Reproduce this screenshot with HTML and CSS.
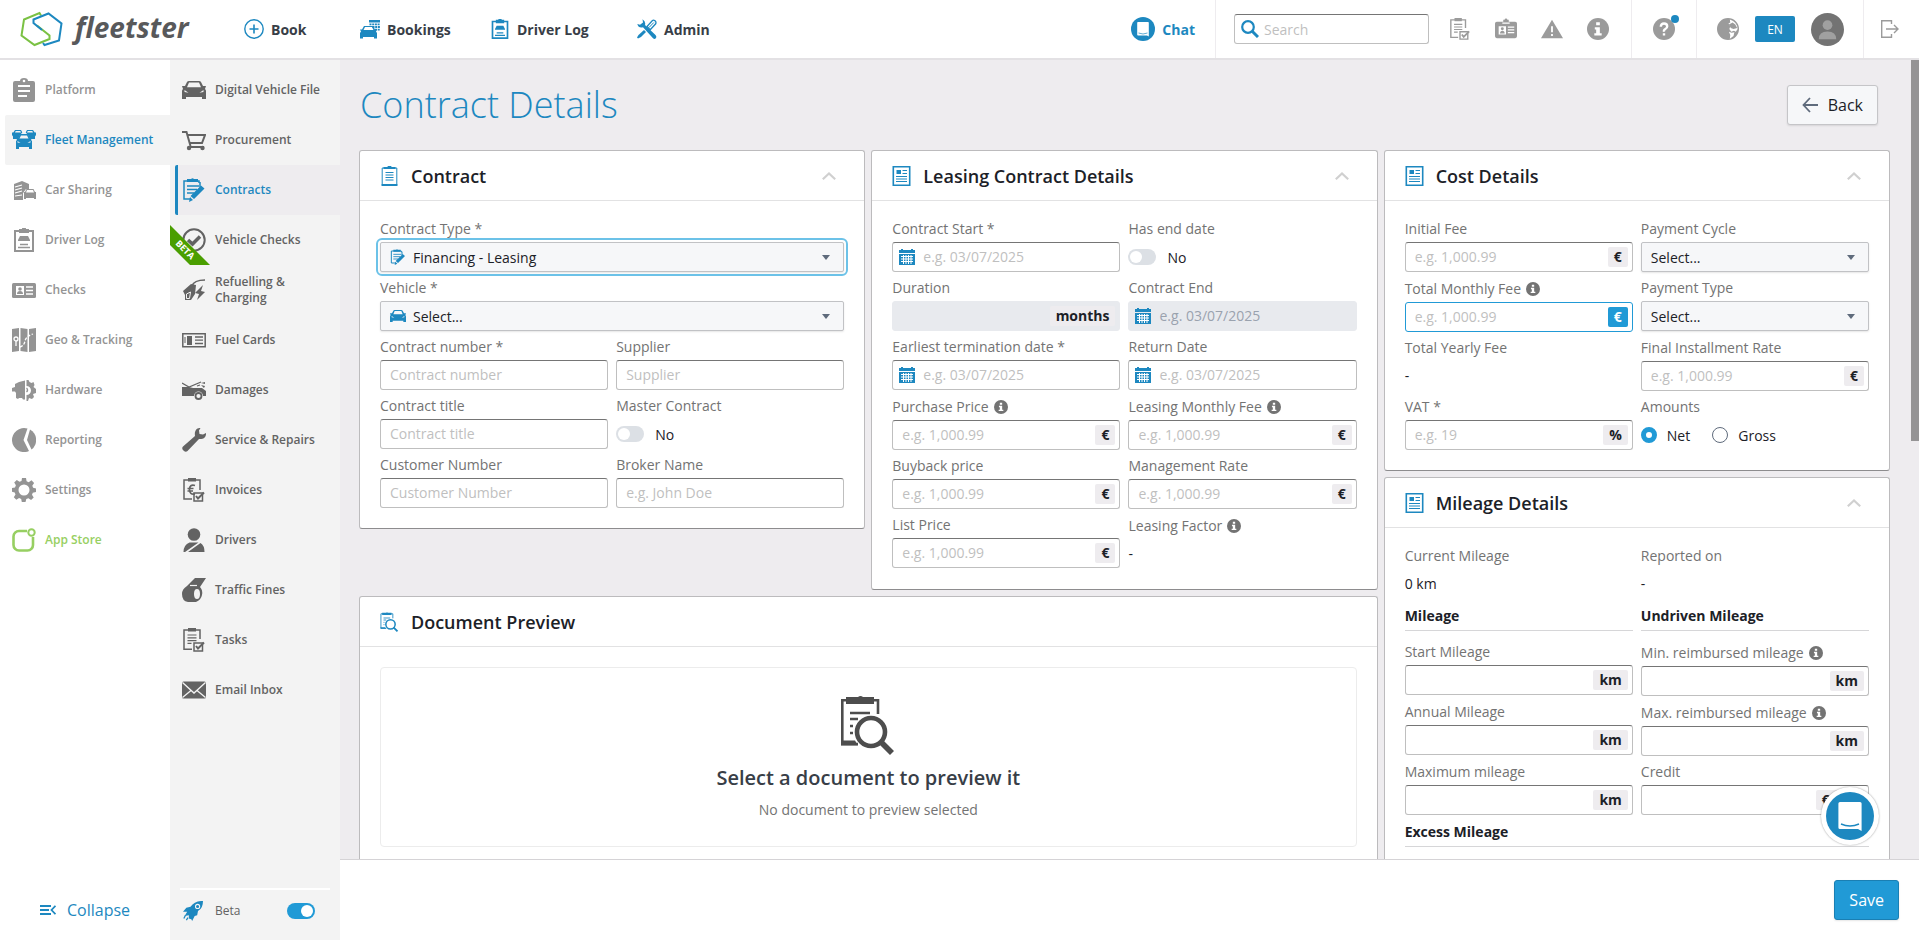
FILE: index.html
```
<!DOCTYPE html>
<html lang="en">
<head>
    <meta charset="UTF-8">
    <meta name="viewport" content="width=device-width, initial-scale=1.0">
    <title>Contract Details - fleetster</title>
    <link rel="stylesheet" href="styles.css">
</head>
<body>

    <!-- Icon sprite -->
    <svg class="sprite" aria-hidden="true">
        <symbol id="i-car" viewBox="0 0 24 18"><path fill-rule="evenodd" d="M1 8 0 5h3l2-4q.5-1 2-1h10q1.5 0 2 1l2 4h3l-1 3q1 .8 1 2v8h-4v-2H4v2H0v-8q0-1.200 1-2zM5 6.200h14l-2-4.700H7zM2.500 9v2l4 .8zM21.500 9v2l-4 .8z"/></symbol>
        <symbol id="i-platform" viewBox="0 0 24 24"><path d="M3 3h5a4 3 0 0 1 8 0h5a2 2 0 0 1 2 2v17a2 2 0 0 1-2 2H3a2 2 0 0 1-2-2V5a2 2 0 0 1 2-2z"/><path class="cut" stroke-width="2" d="M6 8h12M6 13h12M6 18h9"/><circle class="cutfill" cx="12" cy="3" r="1.300"/></symbol>
        <symbol id="i-fleet" viewBox="0 0 24 24"><path fill-rule="evenodd" d="M0 4.500h1.300L3 2h6l1.300 2.500L8 7l-2 4H1V8.500L0 7zM3 4.500h6L8.300 3H3.700zM24 4.500h-1.300L21 2h-6l-1.300 2.500L16 7l2 4h5V8.500L24 7zM21 4.500h-6l.7-1.500h4.600z"/><path fill-rule="evenodd" d="M5 12l-1-2h2l2-4h8l2 4h2l-1 2 1 1v8h-3v-2H7v2H4v-8zM7.500 10.500h9L15 7.500H9zM5.500 13v1.500l3 .5zM18.500 13v1.500l-3 .5z"/></symbol>
        <symbol id="i-sharing" viewBox="0 0 24 24"><path d="M2 22V6l8-3 7 3v5h-3l-3 4v7H1z"/><path class="cut" stroke-width="1.200" d="M3 9l7-2M3 12l7-2M3 15l7-2M3 18l7-1"/><path fill-rule="evenodd" d="M12 15l-.5-1h1.500l1.500-3h7l1.500 3H24v7h-2v-1h-8v1h-2zM14 14.500h8l-1-2.500h-6z"/></symbol>
        <symbol id="i-log" viewBox="0 0 24 24"><path class="ln" stroke-width="2" d="M3 3h18v20H3z"/><path d="M7 1h3a2 2 0 0 1 4 0h3v4H7zM6 12l2-4h8l2 4v1H6z"/><path class="ln" stroke-width="1.500" d="M8 16.500h8M6 19.500h12"/></symbol>
        <symbol id="i-checks" viewBox="0 0 24 24"><rect y="5" width="24" height="15" rx="1.500"/><path class="cut" stroke-width="1.500" d="M14 9h7M14 12.500h7M14 16h7"/><path class="cutfill" d="M4 8h8v9H4z"/><circle cx="8" cy="11" r="1.800"/><path d="M5 16q0-3 3-3t3 3z"/></symbol>
        <symbol id="i-geo" viewBox="0 0 24 24"><path d="M0 1l7-1v23l-7 1zM8.500 0l7 1v23l-7-1zM17 1l7-1v23l-7 1z"/><path class="cut" stroke-width="1.300" stroke-dasharray="3 1.500" d="M8 19q4-1 5-6t8-7"/><circle class="cut" cx="4" cy="11" r="2" stroke-width="1.300"/><path class="cut" stroke-width="1.300" d="M4 13v5"/></symbol>
        <symbol id="i-hardware" viewBox="0 0 24 24"><path d="M13 2.500v19h-2l-1-1.500H7l-1 1-2-1v-5l-1-1.500H0V10l3-1V6l4-2z"/><path d="M14.500 2h2l1 2 2 1 2-1 1 3-1 2 2.500 2v4l-3 1 1 3-2 2-3-1-1 3h-1.500v-6a4.500 4.500 0 0 0 0-9z"/><path class="ln" stroke-width="1.500" d="M14.500 10a2.500 2.500 0 0 1 0 4"/></symbol>
        <symbol id="i-pie" viewBox="0 0 24 24"><path d="M15.500.6A12 12 0 1 0 17 23l-5.500-11z"/><path d="M18 1.500a12 12 0 0 1 1.500 20L15 12z"/></symbol>
        <symbol id="i-gear" viewBox="0 0 24 24"><path fill-rule="evenodd" d="M10 0h4l.6 3.300 2.100.9L19.500 2.300l2.600 2.600-1.800 2.900.8 2L24 10.500v3.600l-3.200.7-.8 2 1.700 2.700-2.600 2.600-2.700-1.800-2.100.8L13.500 24h-3.700l-.6-3-2.100-.9-2.800 1.700-2.500-2.600 1.700-2.700-.8-2L0 13.700V10l3-.6.900-2.100L2.200 4.600 4.800 2l2.700 1.700 2-.8zM12 6.500a5.500 5.500 0 1 0 0 11 5.500 5.500 0 0 0 0-11z"/></symbol>
        <symbol id="i-store" viewBox="0 0 24 24"><path class="ln" stroke-width="2.600" d="M15 3H7a5.500 5.500 0 0 0-5.500 5.500V17A5.500 5.500 0 0 0 7 22.500h8.500A5.500 5.500 0 0 0 21 17V9"/><circle class="ln" cx="19.500" cy="4.500" r="3.200" stroke-width="2"/></symbol>
        <symbol id="i-cart" viewBox="0 0 24 24"><path class="ln" stroke-width="2" d="M0 4h4.500l4 14M6 7h17l-3 8H8M8 19h14"/><circle cx="7" cy="20" r="2.200"/><circle cx="20.500" cy="20" r="2.200"/></symbol>
        <symbol id="i-contract" viewBox="0 0 24 24"><path class="ln" stroke-width="1.500" d="M17 5V3H2v18h7"/><path class="ln" stroke-width="1.300" d="M5 8h12M5 11.500h10M5 15h7"/><path d="M5 1h4a2 1.500 0 0 1 3 0h4v3H5zM19 7.500l3.500 3L12 21l-3.500-3zM8 19l3 3-4 2z"/><path class="ln" stroke-width="1.500" d="M18 9V4"/></symbol>
        <symbol id="i-vcheck" viewBox="0 0 24 24"><circle class="ln" cx="12" cy="12" r="10.700" stroke-width="2"/><path class="ln" stroke-width="3.500" d="M6 12l4.500 4L18 8.500"/></symbol>
        <symbol id="i-fuel" viewBox="0 0 24 24"><path class="ln" stroke-width="1.500" d="M10 8q2-6 13-6"/><path d="M1 13 9 6l5 1-1 9-4 6H3v-5z"/><path class="cut" stroke-width="1" d="M4.500 20.500V16l4-2-1 6.500z"/><path d="M21 7l-8 8 4 1-2 6 8-8-4-1z"/></symbol>
        <symbol id="i-fcard" viewBox="0 0 24 24"><path class="ln" stroke-width="1.500" d="M.8 5.800h22.400v13H.8z"/><path d="M5 8h5v9H5z"/><path class="ln" stroke-width="1" d="M3 9v6"/><path class="ln" stroke-width="1.300" d="M13 9h8M13 12.200h8M13 15.500h8"/></symbol>
        <symbol id="i-damage" viewBox="0 0 24 24"><path d="M0 9h7l4 1h9l4 3v5h-3a4.500 4.500 0 0 0-9 0H0z"/><path class="ln" stroke-width="1.200" d="M0 5l7 4 12-5M15 8l3-1"/><path d="M19 5l4-1v2zM19 7l4 1-1 2z"/><circle class="ln" cx="16.500" cy="18" r="3" stroke-width="1.800"/></symbol>
        <symbol id="i-wrench" viewBox="0 0 24 24"><path d="M18.500 0 17 2.500 17.500 6l3.500.5L24 5c.3 4-2.500 6.500-7 6L5.500 23c-1 1-2.500 1-3.500 0l-1-1c-1-1-1-2.500 0-3.500L13 8c-.8-5 1.500-8.300 5.500-8z"/></symbol>
        <symbol id="i-invoice" viewBox="0 0 24 24"><path class="ln" stroke-width="1.500" d="M10 21H2V2h16v10"/><path d="M6 0h8v3.500H6z"/><path class="ln" stroke-width="1.700" d="M13 7.500Q7.500 6 7.500 11.500T13 16M5.500 10.500h6M5.500 13h5.500"/><path class="ln" stroke-width="1.500" d="M12 15h8.500v8H12z"/><path class="ln" stroke-width="2" d="M14 18l2 2.500 6-6"/></symbol>
        <symbol id="i-driver" viewBox="0 0 24 24"><circle cx="12" cy="6.500" r="6.300"/><path d="M1.500 24q0-7 6-9.500h9L3 24zM6 24l12.500-9q4 2.500 4 9z"/></symbol>
        <symbol id="i-whistle" viewBox="0 0 24 24"><path fill-rule="evenodd" d="M5 8l8-8h11l-6 9q3 3 2 8t-6 7H6q-6-1-6-8 0-5 5-8zM15 11q-3 0-3 5t3 5 3-5-3-5z"/><path class="cut" stroke-width="1.200" d="M8 7.500h7"/></symbol>
        <symbol id="i-tasks" viewBox="0 0 24 24"><path class="ln" stroke-width="1.500" d="M10 21.200H2V2h16v9"/><path d="M6 0h8v3.500H6z"/><path class="ln" stroke-width="1.200" d="M5.500 7h9M5.500 9.800h9M5.500 12.600h9M5.500 15.400h4"/><path class="ln" stroke-width="1.500" d="M12 15h8.500v8H12z"/><path class="ln" stroke-width="2" d="M14 18l2 2.500 6-6"/></symbol>
        <symbol id="i-mail" viewBox="0 0 24 24"><rect y="3.500" width="24" height="17" rx="1.500"/><path class="cut" stroke-width="1.300" d="M.5 4.500 12 15 23.500 4.500M.5 19.500l8.500-7M23.500 19.500l-8.500-7"/></symbol>
        <symbol id="i-rocket" viewBox="0 0 24 24"><path d="M24 0Q14-.5 9 7L4 8l-4 5h5l-3 5 5-1v4l3 1 1 2 3-6 3-1 1-5Q24 9 24 0z"/><circle class="cut" cx="17.500" cy="6.500" r="2.500" stroke-width="1.300"/><path class="ln" stroke-width="1.500" d="M3 17l-2 4M6 20l-2 3"/></symbol>
        <symbol id="i-collapse" viewBox="0 0 16 10"><path class="ln" stroke-width="1.800" d="M0 1h11M0 5h9M0 9h11M15.500.8 11.500 5l4 4.200"/></symbol>
        <symbol id="i-plus" viewBox="0 0 20 20"><circle class="ln" cx="10" cy="10" r="9.200" stroke-width="1.400"/><path class="ln" stroke-width="1.600" d="M10 5.500v9M5.500 10h9"/></symbol>
        <symbol id="i-bookings" viewBox="0 0 20 20"><path d="M9 1h11v2.500H9z"/><path class="ln" stroke-width="1.800" stroke-dasharray="2 .7" d="M9.500 5.300H20M12.500 8H20M15 10.700h5"/><path fill-rule="evenodd" d="M1 12.500 0 10.500h2l2-3.500h9l2 3.500h2l-1 2 1 1.500v5.500h-3V18H3v1.500H0V14zM3.500 11h10L12 8H5z"/></symbol>
        <symbol id="i-tools" viewBox="0 0 20 20"><path d="M5.500.3Q9 2.500 8 6l10.500 10q1.500 1.700.3 3.200t-3-.2L6 8.300Q1.500 9.500.3 5L3 5.800 6 3.500z"/><path class="ln" stroke-width="1.300" d="M11.500 9 10 7.500l5.500-6q1-1 2.500.3t.7 3l-5.500 6z"/><path class="ln" stroke-width="1" d="M16.800 3.500 12 8.500"/><path d="M7 11l2 2-5 5-3 1.500L0 18.500 1.500 16z"/></symbol>
        <symbol id="i-chat" viewBox="0 0 24 24"><circle cx="12" cy="12" r="12"/><path class="cutfill" d="M7 5h10a.8.8 0 0 1 .8.8V19.500L16 18.500H7a.8.8 0 0 1-.8-.8V5.800A.8.8 0 0 1 7 5z"/><path class="ln" stroke-width=".7" d="M7.500 16q4.500 2 9 0"/></symbol>
        <symbol id="i-search" viewBox="0 0 18 18"><circle class="ln" cx="7" cy="7" r="5.800" stroke-width="2.200"/><path class="ln" stroke-width="3" d="M11.200 11.200 17 17"/></symbol>
        <symbol id="i-badge" viewBox="0 0 24 24"><path d="M2 4h7V2h1.500a1.500 1.500 0 0 1 3 0H15v2h7q2 0 2 2v14q0 2-2 2H2q-2 0-2-2V6q0-2 2-2z"/><path class="cut" stroke-width="1.400" d="M8 5.500h8M14 10h7M14 13h7M14 16h7"/><path class="cutfill" d="M4 9h8v9H4z"/><circle cx="8" cy="11.800" r="1.600"/><path d="M5.500 17q0-3 2.500-3t2.500 3z"/></symbol>
        <symbol id="i-warn" viewBox="0 0 24 24"><path d="M12 2l12 20H0z"/><path class="cut" stroke-width="2" d="M12 9v6.500M12 17.500v2"/></symbol>
        <symbol id="i-info" viewBox="0 0 24 24"><circle cx="12" cy="12" r="12"/><path class="cutfill" d="M10 4.500h4v3.500h-4zM8.500 10H14v6.500h2V19H8v-2.500h2v-4H8.500z"/></symbol>
        <symbol id="i-help" viewBox="0 0 24 24"><circle cx="12" cy="12" r="12"/><path class="cut" stroke-width="2.600" d="M8.500 9.500Q8.500 6 12 6t3.500 3q0 2-2 3T12 15M12 16.500v2.600"/></symbol>
        <symbol id="i-globe" viewBox="0 0 24 24"><path fill-rule="evenodd" d="M12 0a12 12 0 1 0 0 24 12 12 0 0 0 0-24zM14 1.500Q22 4 22.500 12l-2 3-2-1-3 1-2-3 1-3-2-3 2-1zM13 15l3 1 3-.5-1 4-4 3 .5-4z"/><path d="M13 7l4-2 3 2 2 4-4 1-3-1z"/></symbol>
        <symbol id="i-exit" viewBox="0 0 18 18"><path class="ln" stroke-width="1.400" d="M10.500 4V.7H.7v16.600h9.800V14M5 9h12M13 5l4 4-4 4"/></symbol>
        <symbol id="i-doc" viewBox="0 0 16 20"><path class="ln" stroke-width="1" d="M.7 2h14.600v16.500H.7z"/><path d="M2 1h4a2 1.500 0 0 1 4 0h4v2H2zM0 18h16v2H0z"/><path class="ln" stroke-width="1" d="M4 6.500h8M4 9h8M4 11.500h8M4 14h8"/></symbol>
        <symbol id="i-news" viewBox="0 0 18 20"><path class="ln" stroke-width="1.600" d="M.8.8h16.400v18.400H.8z"/><path d="M4 4h4.500v4H4z"/><path class="ln" stroke-width="1" d="M10 4.500h4.500M10 7.500h4.500M3.500 10.500h11M3.500 13h11M3.500 15.500h11"/></symbol>
        <symbol id="i-preview" viewBox="0 0 54 60"><path class="ln" stroke-width="2.600" d="M37 19V5.300H1.300V49H17"/><path d="M5 2h12a3.500 2.800 0 0 1 5 0h11v7H5zM0 45.500h14l3 5H0zM41 44l12 12-4 4-12-12z"/><path class="ln" stroke-width="2.600" d="M9 18h20M9 24h8M9 31h3M9 38h3"/><circle class="ln" cx="30" cy="37" r="14" stroke-width="4.600"/></symbol>
        <symbol id="i-cal" viewBox="0 0 16 16"><path d="M0 1h2V0h2v1h8V0h2v1h2v3H0zM0 5h16v11H0z"/><path class="cut" stroke-width="1" d="M2 7.500h12M2 10h12M2 12.500h12M4.500 6v9M7 6v9M9.500 6v9M12 6v9"/></symbol>
        <symbol id="i-up" viewBox="0 0 14 8"><path class="ln" stroke-width="2.200" d="M.8 7.200 7 1.500l6.200 5.700"/></symbol>
        <symbol id="i-back" viewBox="0 0 16 16"><path class="ln" stroke-width="1.800" d="M16 8H1.500M8 1 1.500 8 8 15"/></symbol>
    </svg>

    <header class="topbar">
        <a class="logo" href="#">
            <svg class="logo-mark" viewBox="0 0 43 36" aria-hidden="true">
                <path fill="none" stroke="#7ac143" stroke-width="2" d="M21 4.500 19.500 2 4 8.500 1.500 24.500 14.500 34 29.500 28V24.500L17 14.500"/>
                <path fill="none" stroke="#1d88c0" stroke-width="2" d="M22 19 13.500 12V8.500L28.500 2.500 41.500 12.500 39 29.500 24.500 34 23 32"/>
            </svg>
            <span class="logo-text">fleetster</span>
        </a>
        <nav class="topnav" aria-label="Main">
            <a href="#"><svg><use href="#i-plus"/></svg>Book</a>
            <a href="#"><svg><use href="#i-bookings"/></svg>Bookings</a>
            <a href="#"><svg><use href="#i-log"/></svg>Driver Log</a>
            <a href="#"><svg><use href="#i-tools"/></svg>Admin</a>
        </nav>
        <div class="tools">
            <a class="chat-link" href="#"><svg><use href="#i-chat"/></svg>Chat</a>
            <div class="tool-group search-group">
                <div class="search">
                    <svg><use href="#i-search"/></svg>
                    <input type="text" placeholder="Search" aria-label="Search">
                </div>
                <button class="tool" aria-label="Tasks"><svg><use href="#i-tasks"/></svg></button>
                <button class="tool" aria-label="License checks"><svg><use href="#i-badge"/></svg></button>
                <button class="tool" aria-label="Warnings"><svg><use href="#i-warn"/></svg></button>
                <button class="tool" aria-label="Information"><svg><use href="#i-info"/></svg></button>
            </div>
            <div class="tool-group">
                <button class="tool help" aria-label="Help"><svg><use href="#i-help"/></svg></button>
            </div>
            <div class="tool-group user-group">
                <button class="tool" aria-label="Language"><svg><use href="#i-globe"/></svg></button>
                <button class="lang">EN</button>
                <button class="avatar" aria-label="Account">
                    <svg viewBox="0 0 34 34"><circle cx="17" cy="17" r="17" fill="#737373"/><circle cx="17" cy="12.500" r="5" fill="#a0a0a0"/><path d="M8 27q0-8 9-8t9 8z" fill="#a0a0a0"/></svg>
                </button>
            </div>
            <div class="tool-group">
                <button class="tool exit" aria-label="Log out"><svg><use href="#i-exit"/></svg></button>
            </div>
        </div>
    </header>

    <div class="layout">
        <!-- First level navigation -->
        <nav class="sidebar" aria-label="Modules">
            <a href="#"><svg><use href="#i-platform"/></svg>Platform</a>
            <a href="#" class="active"><svg><use href="#i-fleet"/></svg>Fleet Management</a>
            <a href="#"><svg><use href="#i-sharing"/></svg>Car Sharing</a>
            <a href="#"><svg><use href="#i-log"/></svg>Driver Log</a>
            <a href="#"><svg><use href="#i-checks"/></svg>Checks</a>
            <a href="#"><svg><use href="#i-geo"/></svg>Geo &amp; Tracking</a>
            <a href="#"><svg><use href="#i-hardware"/></svg>Hardware</a>
            <a href="#"><svg><use href="#i-pie"/></svg>Reporting</a>
            <a href="#"><svg><use href="#i-gear"/></svg>Settings</a>
            <a href="#" class="store"><svg><use href="#i-store"/></svg>App Store</a>
            <button class="collapse"><svg><use href="#i-collapse"/></svg>Collapse</button>
        </nav>

        <!-- Second level navigation -->
        <nav class="sidebar submenu" aria-label="Fleet Management">
            <a href="#"><svg><use href="#i-car"/></svg>Digital Vehicle File</a>
            <a href="#"><svg><use href="#i-cart"/></svg>Procurement</a>
            <a href="#" class="active"><svg><use href="#i-contract"/></svg>Contracts</a>
            <a href="#"><svg><use href="#i-vcheck"/></svg>Vehicle Checks
                <svg class="ribbon" viewBox="0 0 40 40"><path d="M0 0l40 40H20L0 20z" fill="#4a9e00"/><text x="0" y="0" transform="translate(5 19) rotate(45)">BETA</text></svg>
            </a>
            <a href="#"><svg><use href="#i-fuel"/></svg>Refuelling &amp;<br>Charging</a>
            <a href="#"><svg><use href="#i-fcard"/></svg>Fuel Cards</a>
            <a href="#"><svg><use href="#i-damage"/></svg>Damages</a>
            <a href="#"><svg><use href="#i-wrench"/></svg>Service &amp; Repairs</a>
            <a href="#"><svg><use href="#i-invoice"/></svg>Invoices</a>
            <a href="#"><svg><use href="#i-driver"/></svg>Drivers</a>
            <a href="#"><svg><use href="#i-whistle"/></svg>Traffic Fines</a>
            <a href="#"><svg><use href="#i-tasks"/></svg>Tasks</a>
            <a href="#"><svg><use href="#i-mail"/></svg>Email Inbox</a>
            <div class="beta-row">
                <svg><use href="#i-rocket"/></svg>
                <label for="beta">Beta</label>
                <input class="switch" type="checkbox" id="beta" checked>
            </div>
        </nav>

        <main>
            <div class="content">
                <div class="page-head">
                    <h1>Contract Details</h1>
                    <button class="btn-back"><svg><use href="#i-back"/></svg>Back</button>
                </div>

                <div class="cards">
                    <section class="card">
                        <div class="card-head">
                            <svg><use href="#i-doc"/></svg>
                            <h2>Contract</h2>
                            <button class="fold" aria-label="Fold"><svg><use href="#i-up"/></svg></button>
                        </div>
                        <div class="fields">
                            <div class="field wide">
                                <label for="type">Contract Type *</label>
                                <div class="select icon-select focused">
                                    <select id="type"><option>Financing - Leasing</option></select>
                                    <svg><use href="#i-contract"/></svg>
                                </div>
                            </div>
                            <div class="field wide">
                                <label for="vehicle">Vehicle *</label>
                                <div class="select icon-select">
                                    <select id="vehicle"><option>Select...</option></select>
                                    <svg><use href="#i-car"/></svg>
                                </div>
                            </div>
                            <div class="field">
                                <label for="number">Contract number *</label>
                                <div class="box"><input type="text" id="number" placeholder="Contract number"></div>
                            </div>
                            <div class="field">
                                <label for="supplier">Supplier</label>
                                <div class="box"><input type="text" id="supplier" placeholder="Supplier"></div>
                            </div>
                            <div class="field">
                                <label for="ctitle">Contract title</label>
                                <div class="box"><input type="text" id="ctitle" placeholder="Contract title"></div>
                            </div>
                            <div class="field">
                                <label for="master">Master Contract</label>
                                <div class="toggle"><input class="switch" type="checkbox" id="master"><span>No</span></div>
                            </div>
                            <div class="field">
                                <label for="customer">Customer Number</label>
                                <div class="box"><input type="text" id="customer" placeholder="Customer Number"></div>
                            </div>
                            <div class="field">
                                <label for="broker">Broker Name</label>
                                <div class="box"><input type="text" id="broker" placeholder="e.g. John Doe"></div>
                            </div>
                        </div>
                    </section>

                    <section class="card">
                        <div class="card-head">
                            <svg><use href="#i-news"/></svg>
                            <h2>Leasing Contract Details</h2>
                            <button class="fold" aria-label="Fold"><svg><use href="#i-up"/></svg></button>
                        </div>
                        <div class="fields">
                            <div class="field">
                                <label for="start">Contract Start *</label>
                                <div class="box date"><svg><use href="#i-cal"/></svg><input type="text" id="start" placeholder="e.g. 03/07/2025"></div>
                            </div>
                            <div class="field">
                                <label for="hasend">Has end date</label>
                                <div class="toggle"><input class="switch" type="checkbox" id="hasend"><span>No</span></div>
                            </div>
                            <div class="field">
                                <label for="duration">Duration</label>
                                <div class="box disabled"><input type="text" id="duration" disabled><span class="unit">months</span></div>
                            </div>
                            <div class="field">
                                <label for="end">Contract End</label>
                                <div class="box date disabled"><svg><use href="#i-cal"/></svg><input type="text" id="end" placeholder="e.g. 03/07/2025" disabled></div>
                            </div>
                            <div class="field">
                                <label for="termination">Earliest termination date *</label>
                                <div class="box date"><svg><use href="#i-cal"/></svg><input type="text" id="termination" placeholder="e.g. 03/07/2025"></div>
                            </div>
                            <div class="field">
                                <label for="return">Return Date</label>
                                <div class="box date"><svg><use href="#i-cal"/></svg><input type="text" id="return" placeholder="e.g. 03/07/2025"></div>
                            </div>
                            <div class="field">
                                <label class="with-info" for="purchase">Purchase Price <svg><use href="#i-info"/></svg></label>
                                <div class="box"><input type="text" id="purchase" placeholder="e.g. 1,000.99"><span class="unit">€</span></div>
                            </div>
                            <div class="field">
                                <label class="with-info" for="leasefee">Leasing Monthly Fee <svg><use href="#i-info"/></svg></label>
                                <div class="box"><input type="text" id="leasefee" placeholder="e.g. 1,000.99"><span class="unit">€</span></div>
                            </div>
                            <div class="field">
                                <label for="buyback">Buyback price</label>
                                <div class="box"><input type="text" id="buyback" placeholder="e.g. 1,000.99"><span class="unit">€</span></div>
                            </div>
                            <div class="field">
                                <label for="management">Management Rate</label>
                                <div class="box"><input type="text" id="management" placeholder="e.g. 1,000.99"><span class="unit">€</span></div>
                            </div>
                            <div class="field">
                                <label for="list">List Price</label>
                                <div class="box"><input type="text" id="list" placeholder="e.g. 1,000.99"><span class="unit">€</span></div>
                            </div>
                            <div class="field">
                                <span class="label with-info">Leasing Factor <svg><use href="#i-info"/></svg></span>
                                <div class="value">-</div>
                            </div>
                        </div>
                    </section>

                    <div class="side-cards">
                        <section class="card">
                            <div class="card-head">
                                <svg><use href="#i-news"/></svg>
                                <h2>Cost Details</h2>
                                <button class="fold" aria-label="Fold"><svg><use href="#i-up"/></svg></button>
                            </div>
                            <div class="fields">
                                <div class="field">
                                    <label for="initial">Initial Fee</label>
                                    <div class="box"><input type="text" id="initial" placeholder="e.g. 1,000.99"><span class="unit">€</span></div>
                                </div>
                                <div class="field">
                                    <label for="cycle">Payment Cycle</label>
                                    <div class="select"><select id="cycle"><option>Select...</option></select></div>
                                </div>
                                <div class="field">
                                    <label class="with-info" for="monthly">Total Monthly Fee <svg><use href="#i-info"/></svg></label>
                                    <div class="box current"><input type="text" id="monthly" placeholder="e.g. 1,000.99"><span class="unit">€</span></div>
                                </div>
                                <div class="field">
                                    <label for="ptype">Payment Type</label>
                                    <div class="select"><select id="ptype"><option>Select...</option></select></div>
                                </div>
                                <div class="field">
                                    <span class="label">Total Yearly Fee</span>
                                    <div class="value">-</div>
                                </div>
                                <div class="field">
                                    <label for="final">Final Installment Rate</label>
                                    <div class="box"><input type="text" id="final" placeholder="e.g. 1,000.99"><span class="unit">€</span></div>
                                </div>
                                <div class="field">
                                    <label for="vat">VAT *</label>
                                    <div class="box"><input type="text" id="vat" placeholder="e.g. 19"><span class="unit">%</span></div>
                                </div>
                                <div class="field">
                                    <span class="label">Amounts</span>
                                    <div class="radios">
                                        <label><input type="radio" name="amounts" checked>Net</label>
                                        <label><input type="radio" name="amounts">Gross</label>
                                    </div>
                                </div>
                            </div>
                        </section>

                        <section class="card">
                            <div class="card-head">
                                <svg><use href="#i-news"/></svg>
                                <h2>Mileage Details</h2>
                                <button class="fold" aria-label="Fold"><svg><use href="#i-up"/></svg></button>
                            </div>
                            <div class="fields">
                                <div class="field">
                                    <span class="label">Current Mileage</span>
                                    <div class="value">0 km</div>
                                </div>
                                <div class="field">
                                    <span class="label">Reported on</span>
                                    <div class="value">-</div>
                                </div>
                                <h3>Mileage</h3>
                                <h3>Undriven Mileage</h3>
                                <div class="field">
                                    <label for="smile">Start Mileage</label>
                                    <div class="box"><input type="text" id="smile"><span class="unit">km</span></div>
                                </div>
                                <div class="field">
                                    <label class="with-info" for="minmile">Min. reimbursed mileage <svg><use href="#i-info"/></svg></label>
                                    <div class="box"><input type="text" id="minmile"><span class="unit">km</span></div>
                                </div>
                                <div class="field">
                                    <label for="amile">Annual Mileage</label>
                                    <div class="box"><input type="text" id="amile"><span class="unit">km</span></div>
                                </div>
                                <div class="field">
                                    <label class="with-info" for="maxmile">Max. reimbursed mileage <svg><use href="#i-info"/></svg></label>
                                    <div class="box"><input type="text" id="maxmile"><span class="unit">km</span></div>
                                </div>
                                <div class="field">
                                    <label for="mmile">Maximum mileage</label>
                                    <div class="box"><input type="text" id="mmile"><span class="unit">km</span></div>
                                </div>
                                <div class="field">
                                    <label for="credit">Credit</label>
                                    <div class="box"><input type="text" id="credit"><span class="unit">€/km</span></div>
                                </div>
                                <h3 class="wide">Excess Mileage</h3>
                            </div>
                        </section>
                    </div>

                    <section class="card preview">
                        <div class="card-head">
                            <svg><use href="#i-preview"/></svg>
                            <h2>Document Preview</h2>
                        </div>
                        <div class="preview-box">
                            <svg><use href="#i-preview"/></svg>
                            <strong>Select a document to preview it</strong>
                            <p>No document to preview selected</p>
                        </div>
                    </section>
                </div>
            </div>
            <div class="scroll-thumb"></div>
            <footer>
                <button class="btn-save">Save</button>
            </footer>
        </main>
    </div>

    <!-- Chat launcher -->
    <button class="chat-bubble" aria-label="Open chat"><svg><use href="#i-chat"/></svg></button>

</body>
</html>
```

FILE: styles.css
```
* {
    box-sizing: border-box;
}

body {
    margin: 0;
    height: 100vh;
    display: flex;
    flex-direction: column;
    overflow: hidden;
    font-family: "Open Sans", "Noto Sans", sans-serif;
    font-size: 14px;
    color: #1c2127;
    background: #fff;
    --cut: #fff;
}

a {
    text-decoration: none;
    color: inherit;
}

button,
input,
select {
    font: inherit;
    color: inherit;
}

button {
    border: none;
    background: none;
    padding: 0;
    cursor: pointer;
}

h1, h2, h3, p {
    margin: 0;
}

svg {
    display: block;
    flex: none;
    fill: currentColor;
}

.sprite {
    position: absolute;
    width: 0;
    height: 0;
}

/* Icon parts */
.ln {
    fill: none;
    stroke: currentColor;
}

.cut {
    fill: none;
    stroke: var(--cut);
}

.cutfill {
    fill: var(--cut);
}

/* Top bar */
.topbar {
    display: flex;
    align-items: center;
    flex: none;
    height: 60px;
    border-bottom: 2px solid #e3e1e4;
}

.logo {
    display: flex;
    align-items: center;
    gap: 12px;
    width: 222px;
    padding-left: 20px;
    margin-right: 21px;
}

.logo-mark {
    width: 43px;
    height: 36px;
}

.logo-text {
    padding-bottom: 4px;
    font-size: 28px;
    line-height: 36px;
    font-weight: 700;
    font-style: italic;
    color: #58595b;
}

.topnav {
    display: grid;
    grid-template-columns: 116px 130px 147px auto;
}

.topnav a {
    display: flex;
    align-items: center;
    gap: 6px;
    font-weight: 700;
    color: #383e47;
}

.topnav svg {
    width: 22px;
    height: 20px;
    color: #1d88c0;
}

.tools {
    display: flex;
    align-items: center;
    height: 100%;
    margin-left: auto;
    color: #9b9b9b;
}

.chat-link {
    display: flex;
    align-items: center;
    gap: 7px;
    padding-right: 20px;
    font-weight: 700;
    color: #1d88c0;
}

.chat-link svg {
    width: 24px;
    height: 24px;
}

.tool-group {
    display: flex;
    align-items: center;
    height: 100%;
    padding: 0 21px;
    border-left: 1px solid #eeecef;
}

.tool-group:last-child {
    padding: 0 20px 0 17px;
}

.search-group {
    gap: 24px;
    padding: 0 22px 0 18px;
}

.search {
    display: flex;
    align-items: center;
    gap: 5px;
    width: 195px;
    height: 30px;
    margin-right: -4px;
    padding-left: 6px;
    border: 1px solid #bfbfbf;
    border-top-color: #757575;
    border-radius: 3px;
}

.search svg {
    width: 18px;
    height: 18px;
    color: #1d88c0;
}

.search input {
    flex: 1;
    min-width: 0;
    padding: 0;
    border: none;
    outline: none;
}

::placeholder {
    color: #bfbfbf;
    opacity: 1;
}

.tool svg {
    width: 22px;
    height: 22px;
}

.tool.exit svg {
    width: 18px;
    height: 18px;
}

.help {
    position: relative;
}

.help::after {
    content: "";
    position: absolute;
    top: -3px;
    right: -4px;
    width: 8px;
    height: 8px;
    border-radius: 50%;
    background: #1d88c0;
}

.user-group {
    gap: 16px;
    padding: 0 19px 0 20px;
}

.lang {
    width: 40px;
    height: 26px;
    border-radius: 2px;
    background: #1d88c0;
    color: #fff;
    font-size: 12px;
}

.avatar svg {
    width: 33px;
    height: 33px;
}

/* Sidebars */
.layout {
    display: flex;
    flex: 1;
    min-height: 0;
}

.sidebar {
    display: flex;
    flex-direction: column;
    flex: none;
    width: 170px;
    padding: 5px 0 0 5px;
    font-size: 12px;
    line-height: 16px;
    font-weight: 600;
    color: #949494;
}

.sidebar a {
    position: relative;
    display: flex;
    align-items: center;
    gap: 9px;
    height: 50px;
    padding-left: 7px;
    border-radius: 2px 0 0 2px;
}

.sidebar a > svg {
    width: 24px;
    height: 24px;
}

.sidebar .active {
    color: #1d88c0;
    background: #f3f3f3;
    --cut: #f3f3f3;
}

.sidebar .store {
    color: #97cf62;
}

.collapse {
    display: flex;
    align-items: center;
    gap: 11px;
    margin: auto 0 18px 35px;
    font-size: 16px;
    line-height: 24px;
    font-weight: 400;
    color: #1d88c0;
}

.collapse svg {
    width: 16px;
    height: 10px;
}

.submenu {
    background: #f3f3f3;
    color: #636363;
    --cut: #f3f3f3;
}

.submenu .active {
    padding-left: 4px;
    border-left: 3px solid #1d88c0;
    background: #eeecef;
    --cut: #eeecef;
}

.sidebar a > .ribbon {
    position: absolute;
    left: -5px;
    bottom: 0;
    width: 40px;
    height: 40px;
}

.ribbon text {
    font-size: 9px;
    font-weight: 700;
    fill: #fff;
}

.beta-row {
    display: flex;
    align-items: center;
    gap: 12px;
    height: 52px;
    margin: auto 10px 0 5px;
    padding: 0 15px 8px 3px;
    border-top: 2px solid #fff;
    font-weight: 400;
}

.beta-row svg {
    width: 20px;
    height: 20px;
    color: #1d88c0;
}

.beta-row .switch {
    margin-left: auto;
}

/* Switches and radios */
.switch {
    appearance: none;
    width: 28px;
    height: 16px;
    margin: 0;
    padding: 2px;
    border-radius: 8px;
    background: #dce0e5;
    cursor: pointer;
}

.switch::before {
    content: "";
    display: block;
    width: 12px;
    height: 12px;
    border-radius: 50%;
    background: #fff;
}

.switch:checked {
    padding-left: 14px;
    background: #219ad6;
}

/* Main area */
main {
    position: relative;
    display: flex;
    flex-direction: column;
    flex: 1;
    min-width: 0;
    background: #eeecef;
}

.content {
    flex: 1;
    min-height: 0;
    padding: 25px 29px 20px 19px;
    overflow-y: auto;
    scrollbar-width: none;
}

.scroll-thumb {
    position: absolute;
    top: 0;
    right: 0;
    width: 8px;
    height: 381px;
    background: #959495;
}

.page-head {
    display: flex;
    justify-content: space-between;
    align-items: center;
    height: 40px;
    margin: 0 12px 25px 1px;
}

h1 {
    font-size: 36px;
    line-height: 40px;
    font-weight: 300;
    color: #1d88c0;
}

.btn-back,
.btn-save {
    display: flex;
    align-items: center;
    gap: 10px;
    height: 40px;
    padding: 0 14px;
    border: 1px solid #c5c5c8;
    border-radius: 3px;
    background: #f6f7f9;
    box-shadow: 0 1px 2px rgba(0, 0, 0, 0.1);
    font-size: 16px;
}

.btn-back svg {
    width: 16px;
    height: 16px;
    color: #5f6b7c;
}

.cards {
    display: grid;
    grid-template-columns: repeat(3, minmax(0, 1fr));
    grid-template-rows: auto 1fr;
    align-items: start;
    gap: 6px;
}

.side-cards {
    display: grid;
    gap: 6px;
    grid-row: span 2;
}

.preview {
    grid-column: span 2;
}

.card {
    border: 1px solid #bcbbbd;
    border-bottom-color: #8d8c8e;
    border-radius: 3px;
    background: #fff;
}

.card-head {
    display: flex;
    align-items: center;
    gap: 12px;
    height: 50px;
    padding: 0 28px 0 20px;
    border-bottom: 1px solid #e2e2e3;
}

.card-head > svg {
    width: 19px;
    height: 20px;
    color: #1d88c0;
}

h2 {
    font-size: 18px;
    line-height: 24px;
    font-weight: 600;
}

.fold {
    margin-left: auto;
    color: #d0d0d0;
}

.fold svg {
    width: 14px;
    height: 8px;
}

/* Fields */
.fields {
    display: grid;
    grid-template-columns: repeat(2, minmax(0, 1fr));
    gap: 5px 8px;
    padding: 17px 20px 20px;
}

.wide {
    grid-column: span 2;
}

.field > label,
.label {
    display: block;
    margin-bottom: 2px;
    line-height: 22px;
    color: #737373;
}

.field > .with-info {
    display: flex;
    align-items: center;
    gap: 5px;
    line-height: 23px;
}

.with-info svg {
    width: 14px;
    height: 14px;
}

.toggle,
.radios {
    display: flex;
    align-items: center;
    gap: 11px;
    height: 30px;
}

.radios {
    gap: 22px;
}

.radios label {
    display: flex;
    align-items: center;
    gap: 10px;
}

.radios input {
    appearance: none;
    width: 16px;
    height: 16px;
    margin: 0;
    border: 1px solid #5f6b7c;
    border-radius: 50%;
    background: #fff;
}

.radios input:checked {
    border: 5px solid #219ad6;
}

.box {
    display: flex;
    align-items: center;
    height: 30px;
    padding: 0 4px 0 9px;
    border: 1px solid #bfbfbf;
    border-top-color: #757575;
    border-radius: 3px;
    background: #fff;
}

.box input {
    flex: 1;
    min-width: 0;
    padding: 0 0 1px;
    border: none;
    outline: none;
    background: none;
}

.date {
    gap: 8px;
    padding-left: 6px;
}

.date svg {
    width: 16px;
    height: 16px;
    color: #1d88c0;
}

.unit {
    padding: 0 6px;
    border-radius: 2px;
    background: #eeecef;
    line-height: 20px;
    font-weight: 700;
}

.current {
    border-color: #219ad6;
}

.current .unit {
    background: #219ad6;
    color: #fff;
}

.disabled {
    border-color: #e8eaee;
    background: #e8eaee;
}

.disabled ::placeholder {
    color: #9aa2ae;
}

.select {
    display: grid;
    align-items: center;
    border-radius: 2px;
}

.select select,
.select svg,
.select::after {
    grid-area: 1 / 1;
}

.select select {
    appearance: none;
    width: 100%;
    height: 30px;
    padding: 0 30px 0 9px;
    border: 1px solid #c1c2c5;
    border-radius: 2px;
    background: #f6f7f9;
    box-shadow: 0 1px 2px rgba(0, 0, 0, 0.1);
}

/* Caret */
.select::after {
    content: "";
    z-index: 1;
    justify-self: end;
    margin-right: 14px;
    border: 4px solid transparent;
    border-top: 5px solid #5f6b7c;
    border-bottom: none;
    pointer-events: none;
}

.icon-select select {
    padding-left: 32px;
}

.select svg {
    z-index: 1;
    width: 16px;
    height: 16px;
    margin-left: 10px;
    color: #1d88c0;
    pointer-events: none;
}

.focused {
    outline: 2px solid #6cc2e8;
    outline-offset: 2px;
}

.value {
    line-height: 30px;
}

h3 {
    margin-bottom: 5px;
    padding-bottom: 2px;
    border-bottom: 1px solid #d6d6d8;
    font-size: 14px;
    line-height: 24px;
    font-weight: 700;
}

/* Document preview */
.preview-box {
    display: flex;
    flex-direction: column;
    align-items: center;
    margin: 20px;
    padding: 27px 20px 25px;
    border: 1px solid #ececec;
    border-radius: 4px;
}

.preview-box svg {
    width: 54px;
    height: 60px;
    color: #4d4d4d;
}

.preview-box strong {
    margin: 9px 0 7px;
    font-size: 20px;
    line-height: 28px;
    font-weight: 600;
    color: #383e47;
}

.preview-box p {
    line-height: 22px;
    color: #737373;
}

/* Footer */
footer {
    display: flex;
    justify-content: flex-end;
    flex: none;
    padding: 20px;
    border-top: 1px solid #d5d3d6;
    background: #fff;
}

.btn-save {
    padding: 0 14px;
    border-color: #1a7fb3;
    background: #219ad6;
    color: #fff;
}

.chat-bubble {
    position: absolute;
    right: 40px;
    bottom: 95px;
    padding: 5px;
    border-radius: 50%;
    background: #fff;
    box-shadow: 0 0 2px rgba(0, 0, 0, 0.4);
    color: #1d88c0;
}

.chat-bubble svg {
    width: 48px;
    height: 48px;
}
```
